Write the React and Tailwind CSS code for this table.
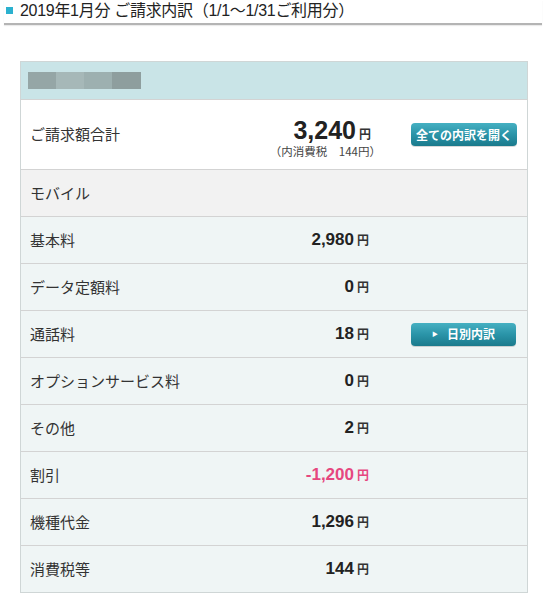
import React from "react";

const rows = [
  { label: "基本料", amount: "2,980" },
  { label: "データ定額料", amount: "0" },
  { label: "通話料", amount: "18", button: true },
  { label: "オプションサービス料", amount: "0" },
  { label: "その他", amount: "2" },
  { label: "割引", amount: "-1,200", pink: true },
  { label: "機種代金", amount: "1,296" },
  { label: "消費税等", amount: "144" },
];

const jp = { fontFamily: '"Noto Sans CJK JP", "Liberation Sans", sans-serif' };
const num = { fontFamily: '"Liberation Sans", Arial, "Noto Sans CJK JP", sans-serif' };

function Btn({ children, className = "" }) {
  return (
    <div
      className={
        "flex items-center justify-center rounded-[4px] bg-gradient-to-b from-[#45b0c2] via-[#2a94a8] to-[#1a7a8c] text-white text-[12px] font-bold shadow-[0_1px_0_rgba(0,0,0,0.15)] " +
        className
      }
      style={jp}
    >
      {children}
    </div>
  );
}

export default function App() {
  return (
    <div className="w-[550px] h-[600px] bg-white text-[#333]" style={jp}>
      {/* Title */}
      <div className="mx-[4px] w-[538px] h-[25px] border-b-2 border-[#b4b4b4] flex items-center pl-[2px] pb-[2px] shadow-[0_1px_1px_rgba(0,0,0,0.08)]">
        <div className="w-[7px] h-[7px] bg-[#2bb1cf] mr-[7px]" />
        <div className="text-[16px] leading-none text-[#222] tracking-[-0.3px]" style={{ fontFamily: '"Liberation Sans", "Noto Sans CJK JP", sans-serif' }}>
          2019年1月分 ご請求内訳（1/1〜1/31ご利用分）
        </div>
      </div>

      {/* Table */}
      <div className="ml-[20px] mt-[36px] w-[508px] border border-[#cfd6d6]">
        <div className="h-[37px] bg-[#c9e4e7] flex items-center pl-[7px]">
          <div className="flex h-[17px] blur-[0.6px]">
            <div className="w-[28px] bg-[#95a6a6]" />
            <div className="w-[28px] bg-[#a6b8b8]" />
            <div className="w-[28px] bg-[#9db0b0]" />
            <div className="w-[29px] bg-[#8e9e9e]" />
          </div>
        </div>
        <div className="h-[70px] bg-white border-t border-[#d3d3d3] flex items-center">
          <div className="w-[200px] pl-[9px] text-[15px]">ご請求額合計</div>
          <div className="w-[150px] flex flex-col items-end pt-[6px]">
            <div className="flex items-baseline">
              <span className="text-[25px] font-bold leading-none text-[#222]" style={num}>3,240</span>
              <span className="text-[12px] font-bold ml-[3px] text-[#333]">円</span>
            </div>
            <div className="text-[11.5px] leading-none mt-[3px] text-[#444] mr-[-10px]">（内消費税　144円）</div>
          </div>
          <div className="flex-1 flex justify-end pr-[10px]">
            <Btn className="w-[106px] h-[23px]">全ての内訳を開く</Btn>
          </div>
        </div>
        <div className="h-[47px] bg-[#f2f2f2] border-t border-[#d3d3d3] flex items-center pl-[9px] text-[15px]">
          モバイル
        </div>
        {rows.map((r) => (
          <div key={r.label} className="h-[47px] bg-[#eff5f5] border-t border-[#d3d3d3] flex items-center">
            <div className="w-[200px] pl-[9px] text-[15px]">{r.label}</div>
            <div className="w-[148px] flex justify-end items-baseline">
              <span className={"text-[17px] font-bold " + (r.pink ? "text-[#e6477f]" : "text-[#222]")} style={num}>
                {r.amount}
              </span>
              <span className={"text-[12px] font-bold ml-[3px] " + (r.pink ? "text-[#e6477f]" : "text-[#333]")}>円</span>
            </div>
            <div className="flex-1 flex justify-end pr-[11px]">
              {r.button && (
                <Btn className="w-[105px] h-[23px] gap-[9px]">
                  <span className="text-[6px] leading-none">▶</span>
                  <span>日別内訳</span>
                </Btn>
              )}
            </div>
          </div>
        ))}
      </div>
    </div>
  );
}
